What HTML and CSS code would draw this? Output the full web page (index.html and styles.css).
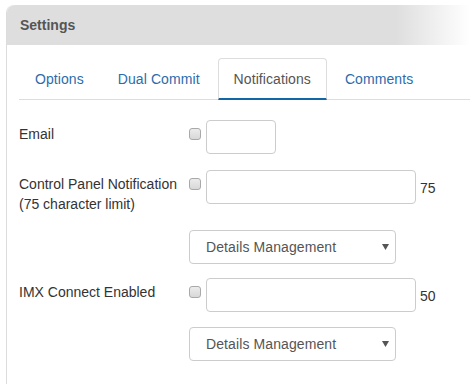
FILE: index.html
```html
<!DOCTYPE html>
<html lang="en">
<head>
    <meta charset="UTF-8">
    <title>Settings</title>
    <link rel="stylesheet" href="styles.css">
</head>
<body>
    <div class="panel">
        <div class="panel-heading">Settings</div>

        <div class="panel-body">
            <ul class="nav-tabs">
                <li><a href="#">Options</a></li>
                <li><a href="#">Dual Commit</a></li>
                <li class="active"><a href="#">Notifications</a></li>
                <li><a href="#">Comments</a></li>
            </ul>

            <!-- Notifications -->
            <div class="form-row row-email">
                <label class="row-label">Email</label>
                <input type="checkbox" class="check">
                <input type="text" class="field field-short">
            </div>

            <div class="form-row row-panel">
                <label class="row-label">Control Panel Notification<br>(75 character limit)</label>
                <input type="checkbox" class="check">
                <input type="text" class="field field-long">
                <span class="limit">75</span>
            </div>

            <div class="form-row row-select">
                <div class="select-wrap">
                    <select class="select">
                        <option>Details Management</option>
                    </select>
                    <svg class="caret" width="7" height="6" viewBox="0 0 7 6"><path d="M0 0H7L3.5 6Z" fill="#555"/></svg>
                </div>
            </div>

            <div class="form-row">
                <label class="row-label">IMX Connect Enabled</label>
                <input type="checkbox" class="check">
                <input type="text" class="field field-long">
                <span class="limit">50</span>
            </div>

            <div class="form-row last">
                <div class="select-wrap">
                    <select class="select">
                        <option>Details Management</option>
                    </select>
                    <svg class="caret" width="7" height="6" viewBox="0 0 7 6"><path d="M0 0H7L3.5 6Z" fill="#555"/></svg>
                </div>
            </div>
        </div>
    </div>
</body>
</html>
```

FILE: styles.css
```css
* {
    margin: 0;
    padding: 0;
    box-sizing: border-box;
}

html, body {
    height: 100%;
    overflow: hidden;
}

body {
    font-family: "Liberation Sans", Arial, sans-serif;
    font-size: 14px;
    line-height: 20px;
    color: #333;
    background: #fff;
    padding: 5px 0 0 6px;
}

.panel {
    height: 100%;
    border-left: 1px solid #dcdcdc;
    border-top-left-radius: 8px;
}

.panel-heading {
    height: 40px;
    padding: 10px 13px;
    font-size: 14px;
    font-weight: bold;
    color: #555;
    border-top-left-radius: 8px;
    background: linear-gradient(to right, #dedede 0%, #dedede 84%, #fff 100%);
}

.panel-body {
    padding: 13px 0 0 12px;
}

.nav-tabs {
    list-style: none;
    display: flex;
    border-bottom: 1px solid #ddd;
    margin-bottom: 20px;
    letter-spacing: 0.08px;
}

.nav-tabs li {
    margin-right: 2px;
    margin-bottom: -1px;
}

.nav-tabs a {
    display: block;
    padding: 10px 15px;
    border: 1px solid transparent;
    border-radius: 4px 4px 0 0;
    color: #2d6cab;
    text-decoration: none;
}

.nav-tabs .active a {
    color: #555;
    border-color: #ddd;
    border-bottom: 2px solid #1366a6;
    padding-bottom: 9px;
}

.form-row {
    display: flex;
    align-items: flex-start;
    margin-bottom: 15px;
    padding-left: 170px;
    position: relative;
}

.row-email {
    margin-bottom: 16px;
}

.row-panel {
    margin-bottom: 26px;
}

.row-select {
    margin-bottom: 14px;
}

.form-row.last {
    margin-bottom: 0;
}

.row-label {
    position: absolute;
    left: 0;
    top: 4px;
    width: 170px;
}

.check {
    appearance: none;
    width: 12px;
    height: 12px;
    margin-top: 8px;
    margin-right: 5px;
    border: 1px solid #a9a9a9;
    border-radius: 3px;
    background: linear-gradient(#ececec, #d8d8d8);
}

.field {
    height: 34px;
    border: 1px solid #ccc;
    border-radius: 4px;
    padding: 6px 12px;
    font: inherit;
}

.field-short {
    width: 70px;
}

.field-long {
    width: 210px;
}

.limit {
    margin-left: 4px;
    margin-top: 8px;
}

.select-wrap {
    position: relative;
    width: 207px;
    height: 34px;
}

.select {
    appearance: none;
    width: 100%;
    height: 34px;
    border: 1px solid #ccc;
    border-radius: 4px;
    padding: 0 16px;
    background: #fff;
    font: inherit;
    letter-spacing: 0.1px;
    color: #555;
}

.caret {
    position: absolute;
    right: 7px;
    top: 14px;
}
```
